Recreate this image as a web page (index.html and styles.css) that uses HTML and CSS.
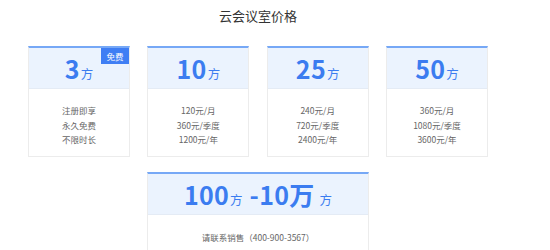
FILE: index.html
```html
<!DOCTYPE html>
<html lang="zh-CN">
<head>
<meta charset="utf-8">
<title>云会议室价格</title>
<link rel="stylesheet" href="styles.css">
</head>
<body>
<div class="page">
  <h1 class="title">云会议室价格</h1>
  <div class="grid">
    <div class="card">
      <div class="head">
        <span class="num">3</span><span class="unit">方</span>
        <span class="badge">免费</span>
      </div>
      <div class="body">
        <p>注册即享</p>
        <p>永久免费</p>
        <p>不限时长</p>
      </div>
    </div>
    <div class="card">
      <div class="head"><span class="num">10</span><span class="unit">方</span></div>
      <div class="body">
        <p>120元/月</p>
        <p>360元/季度</p>
        <p>1200元/年</p>
      </div>
    </div>
    <div class="card">
      <div class="head"><span class="num">25</span><span class="unit">方</span></div>
      <div class="body">
        <p>240元/月</p>
        <p>720元/季度</p>
        <p>2400元/年</p>
      </div>
    </div>
    <div class="card">
      <div class="head"><span class="num">50</span><span class="unit">方</span></div>
      <div class="body">
        <p>360元/月</p>
        <p>1080元/季度</p>
        <p>3600元/年</p>
      </div>
    </div>
    <div class="card wide">
      <div class="head">
        <span class="num">100</span><span class="unit">方</span>
        <span class="num dash">-10万</span><span class="unit gap">方</span>
      </div>
      <div class="body">
        <p>请联系销售（400-900-3567）</p>
      </div>
    </div>
  </div>
</div>
</body>
</html>
```
FILE: styles.css
```css
html, body {
  margin: 0;
  padding: 0;
  background: #ffffff;
}
body {
  font-family: "Noto Sans CJK SC", "Noto Sans", sans-serif;
  color: #333;
}
.page {
  width: 460px;
  margin-left: 28px;
  padding-top: 6px;
}
.title {
  margin: 0 0 20px;
  font-size: 13px;
  line-height: 20px;
  font-weight: normal;
  text-align: center;
  color: #333;
}
.grid {
  display: grid;
  grid-template-columns: repeat(4, 1fr);
  column-gap: 17.33px;
  row-gap: 15px;
}
.card {
  position: relative;
  border: 1px solid #ececec;
  border-top: 2px solid #76a8f6;
  background: #fff;
}
.card.wide {
  grid-column: 2 / 4;
}
.head {
  height: 40px;
  background: #ebf3fe;
  border-bottom: 1px solid #e4ebf5;
  display: flex;
  justify-content: center;
  align-items: baseline;
  line-height: 40px;
  color: #3b7cf0;
}
.num {
  font-size: 25px;
  font-weight: bold;
  letter-spacing: 0.3px;
}
.unit {
  font-size: 12.5px;
  margin-left: 1px;
}
.dash {
  margin-left: 7px;
}
.gap {
  margin-left: 5px;
}
.badge {
  position: absolute;
  top: 0;
  right: 0;
  width: 28px;
  height: 16px;
  background: #3f7ef4;
  color: #fff;
  font-size: 8.5px;
  line-height: 16px;
  text-align: center;
}
.body {
  padding: 14px 0 9px;
  text-align: center;
  font-size: 8.5px;
  line-height: 14.5px;
  color: #666;
}
.body p {
  margin: 0;
}
.wide .body {
  padding-top: 15px;
  padding-bottom: 20px;
}
```
